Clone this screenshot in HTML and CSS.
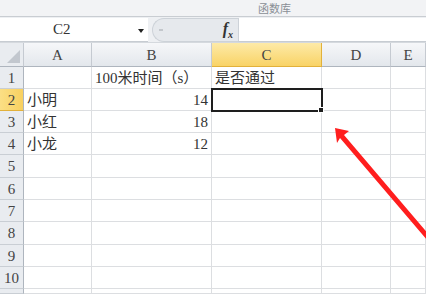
FILE: index.html
```html
<!DOCTYPE html>
<html lang="zh">
<head>
  <meta charset="UTF-8" />
  <title>Excel</title>
  <link rel="stylesheet" href="styles.css">
</head>
<body>
  <div class="ribbon"><span class="ribbon-label">函数库</span></div>

  <div class="formula-bar">
    <div class="name-box">
      <span class="name-text">C2</span>
      <span class="name-arrow"></span>
    </div>
    <div class="pill">
      <span class="pill-dot"></span>
      <span class="fx">f<sub>x</sub></span>
    </div>
    <div class="formula-input"></div>
  </div>

  <div class="sheet">
    <div class="corner"><span class="corner-tri"></span></div>
    <div class="col-head">A</div>
    <div class="col-head">B</div>
    <div class="col-head sel">C</div>
    <div class="col-head">D</div>
    <div class="col-head">E</div>

    <div class="row-head">1</div>
    <div class="cell"></div>
    <div class="cell">100米时间（s）</div>
    <div class="cell">是否通过</div>
    <div class="cell"></div>
    <div class="cell"></div>

    <div class="row-head sel">2</div>
    <div class="cell">小明</div>
    <div class="cell num">14</div>
    <div class="cell active"></div>
    <div class="cell"></div>
    <div class="cell"></div>

    <div class="row-head">3</div>
    <div class="cell">小红</div>
    <div class="cell num">18</div>
    <div class="cell"></div>
    <div class="cell"></div>
    <div class="cell"></div>

    <div class="row-head">4</div>
    <div class="cell">小龙</div>
    <div class="cell num">12</div>
    <div class="cell"></div>
    <div class="cell"></div>
    <div class="cell"></div>

    <div class="row-head">5</div>
    <div class="cell"></div><div class="cell"></div><div class="cell"></div><div class="cell"></div><div class="cell"></div>
    <div class="row-head">6</div>
    <div class="cell"></div><div class="cell"></div><div class="cell"></div><div class="cell"></div><div class="cell"></div>
    <div class="row-head">7</div>
    <div class="cell"></div><div class="cell"></div><div class="cell"></div><div class="cell"></div><div class="cell"></div>
    <div class="row-head">8</div>
    <div class="cell"></div><div class="cell"></div><div class="cell"></div><div class="cell"></div><div class="cell"></div>
    <div class="row-head">9</div>
    <div class="cell"></div><div class="cell"></div><div class="cell"></div><div class="cell"></div><div class="cell"></div>
    <div class="row-head">10</div>
    <div class="cell"></div><div class="cell"></div><div class="cell"></div><div class="cell"></div><div class="cell"></div>
    <div class="row-head"></div>
    <div class="cell"></div><div class="cell"></div><div class="cell"></div><div class="cell"></div><div class="cell"></div>
  </div>

  <!-- red annotation arrow drawn over the sheet -->
  <svg class="arrow" width="426" height="294" viewBox="0 0 426 294">
    <polygon points="335,128 349,131 344,135 430,236 427,240 340,138 337,143" fill="#ff1e1e" />
  </svg>
</body>
</html>
```

FILE: styles.css
```css
body {
  margin: 0;
  width: 426px;
  height: 294px;
  overflow: hidden;
  background: #fff;
  font-family: "Liberation Serif", "Noto Sans CJK SC", serif;
  color: #333;
  position: relative;
}

.ribbon {
  height: 16px;
  background: #f2f3f5;
  border-bottom: 1px solid #c9cdd2;
  display: flex;
  align-items: flex-start;
}

.ribbon-label {
  margin-left: 258px;
  font-family: "Noto Sans CJK SC", sans-serif;
  font-size: 11px;
  line-height: 16px;
  color: #8a8f96;
}

.formula-bar {
  height: 24px;
  display: flex;
  align-items: stretch;
  background: #eef0f3;
  padding-top: 1px;
  border-bottom: 1px solid #d5d9de;
}

.name-box {
  width: 148px;
  background: #fff;
  border-bottom: 1px solid #c7ccd2;
  display: flex;
  align-items: center;
  position: relative;
}

.name-text {
  margin-left: 53px;
  font-size: 15px;
  color: #333;
}

.name-arrow {
  position: absolute;
  left: 138px;
  top: 11px;
  width: 0;
  height: 0;
  border-left: 3px solid transparent;
  border-right: 3px solid transparent;
  border-top: 4px solid #222;
}

.pill {
  width: 85px;
  margin-left: 4px;
  background: #e6e9ed;
  border: 1px solid #cdd2d8;
  border-right: none;
  border-radius: 12px 0 0 12px;
  display: flex;
  align-items: center;
}

.pill-dot {
  margin-left: 6px;
  width: 4px;
  height: 2px;
  background: #c3c7cc;
}

.fx {
  margin-left: auto;
  margin-right: 5px;
  font-style: italic;
  font-weight: bold;
  font-size: 16px;
  color: #333;
}

.fx sub {
  font-size: 10px;
}

.formula-input {
  flex: 1;
  background: #fff;
  border-left: 1px solid #cdd2d8;
  border-bottom: 1px solid #c7ccd2;
}

.sheet {
  display: grid;
  grid-template-columns: 24px 68px 120px 110px 69px 35px;
  grid-template-rows: 24px 22px 22px 22px 22px 23px 22px 22px 23px 22px 22px 5px;
}

.corner {
  background: #e9ecf0;
  border-right: 1px solid #c5cad1;
  border-bottom: 1px solid #aeb5be;
  position: relative;
}

.corner-tri {
  position: absolute;
  right: 3px;
  bottom: 3px;
  width: 0;
  height: 0;
  border-left: 13px solid transparent;
  border-bottom: 13px solid #c2c7ce;
}

.col-head {
  background: linear-gradient(#f6f7f9, #e3e7ec);
  border-right: 1px solid #c5cad1;
  border-bottom: 1px solid #aeb5be;
  text-align: center;
  font-size: 15px;
  line-height: 24px;
  color: #444;
}

.col-head.sel {
  background: linear-gradient(#fdeaa8, #f9d366);
  border-bottom-color: #e2b13a;
  border-right-color: #e2b13a;
}

.row-head {
  background: #e9ecf0;
  border-right: 1px solid #aeb5be;
  border-bottom: 1px solid #c9ced4;
  text-align: center;
  font-size: 15px;
  line-height: 22px;
  color: #444;
}

.row-head.sel {
  background: linear-gradient(90deg, #fbdf85, #f8d060);
  border-bottom-color: #e2b13a;
}

.cell {
  border-right: 1px solid #dcdee1;
  border-bottom: 1px solid #dcdee1;
  font-size: 15px;
  line-height: 22px;
  padding: 0 3px;
  white-space: nowrap;
  color: #333;
}

.cell.num {
  text-align: right;
}

.cell.active {
  position: relative;
  outline: 2px solid #1e1e1e;
  outline-offset: -1px;
  z-index: 1;
}

.cell.active::after {
  content: "";
  position: absolute;
  right: -3px;
  bottom: -3px;
  width: 4px;
  height: 4px;
  background: #1e1e1e;
  border: 1px solid #fff;
}

.arrow {
  position: absolute;
  left: 0;
  top: 0;
  pointer-events: none;
}
```
